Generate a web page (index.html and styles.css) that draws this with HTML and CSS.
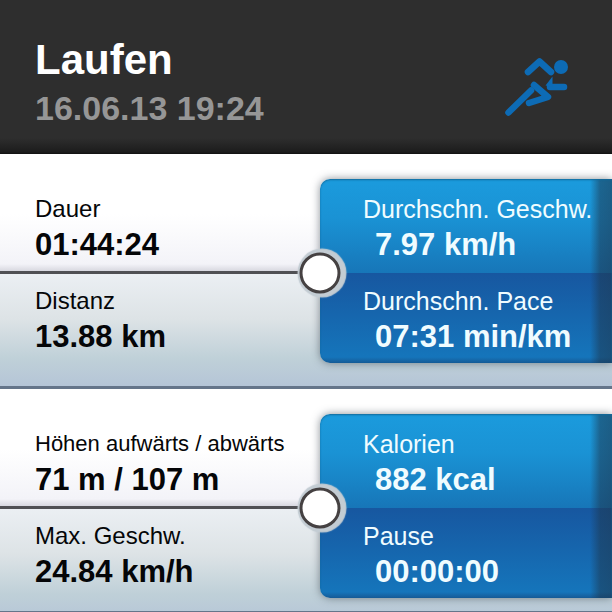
FILE: index.html
```html
<!DOCTYPE html>
<html lang="de">
<head>
<meta charset="utf-8">
<meta name="viewport" content="width=device-width, initial-scale=1">
<title>Laufen</title>
<link rel="stylesheet" href="styles.css">
</head>
<body>
<header class="header">
  <div>
    <h1 class="title">Laufen</h1>
    <time class="date" datetime="2013-06-16T19:24">16.06.13 19:24</time>
  </div>
  <svg class="runner" viewBox="0 0 64 60" aria-hidden="true">
    <path d="M23 18 34.500 7.500 46 18"/>
    <path d="M29 31 43 43 24 49"/>
    <path d="M26 36.500 3.500 58.500"/>
    <path d="M45 33H59"/>
    <path class="solid" d="M40.500 31.500 47.500 22.500V33Z"/>
    <circle class="solid" cx="56" cy="13" r="7"/>
  </svg>
</header>
<main>
  <section class="panel">
    <dl class="stats">
      <div><dt>Dauer</dt><dd>01:44:24</dd></div>
      <div><dt>Distanz</dt><dd>13.88 km</dd></div>
    </dl>
    <dl class="stats card">
      <div><dt>Durchschn. Geschw.</dt><dd>7.97 km/h</dd></div>
      <div><dt>Durchschn. Pace</dt><dd>07:31 min/km</dd></div>
    </dl>
    <span class="knob"></span>
  </section>
  <section class="panel panel-last">
    <dl class="stats">
      <div><dt class="long">Höhen aufwärts / abwärts</dt><dd>71 m / 107 m</dd></div>
      <div><dt>Max. Geschw.</dt><dd>24.84 km/h</dd></div>
    </dl>
    <dl class="stats card">
      <div><dt>Kalorien</dt><dd>882 kcal</dd></div>
      <div><dt>Pause</dt><dd>00:00:00</dd></div>
    </dl>
    <span class="knob"></span>
  </section>
</main>
</body>
</html>
```
FILE: styles.css
```css
* {
  box-sizing: border-box;
}

body {
  margin: 0;
  background: #fff;
  color: #050608;
  font-family: "Liberation Sans", Arial, sans-serif;
}

.header {
  display: flex;
  justify-content: space-between;
  align-items: flex-start;
  padding: 35px 43px 23px 35px;
  background: linear-gradient(#2e2e2e calc(100% - 16px), #1c1c1c calc(100% - 2px), #101010);
  color: #fff;
}

.title {
  margin: 0;
  font-size: 42px;
  line-height: 50px;
}

.date {
  display: block;
  color: #969696;
  font-size: 34px;
  font-weight: bold;
  line-height: 46px;
}

.runner {
  width: 64px;
  height: 60px;
  margin-top: 19px;
  overflow: visible;
  fill: none;
  stroke: #0d6bb5;
  stroke-width: 6.5;
  stroke-linecap: round;
  stroke-linejoin: round;
}

.runner .solid {
  fill: #0d6bb5;
  stroke: none;
}

.panel {
  --split: 320px;
  --line: 119px;
  position: relative;
  display: grid;
  grid-template-columns: var(--split) 1fr;
  padding: 25px 0 23px;
  overflow: hidden;
  border-bottom: 3px solid #65758a;
  background: linear-gradient(
    #fff 0,
    #fff 60px,
    #f3f3f8 110px,
    #d8d8e0 117px,
    #505054 117px,
    #505054 120px,
    #ebeff3 120px,
    #dde3e6 165px,
    #bfd0d8 205px,
    #b5c5d7 232px
  );
}

.panel-last {
  padding-bottom: 13px;
}

.stats {
  display: grid;
  gap: 22px;
  margin: 0;
  padding: 14px 0 8px 35px;
  white-space: nowrap;
}

dt {
  font-size: 24px;
  line-height: 32px;
}

dt.long {
  font-size: 22px;
}

dd {
  margin: 0;
  font-size: 31px;
  font-weight: bold;
  line-height: 39px;
}

.stats > div {
  height: 70px;
}

.card {
  padding-left: 43px;
  border-radius: 10px 0 0 10px;
  background:
    linear-gradient(to left, #1d364d99 0, #1d364d88 12px, transparent 22px),
    linear-gradient(#1b9bdd 0, #1a92d4 40px, #1776b8 94px, #1757a0 94px, #1575bb 178px, #165a96 100%);
  box-shadow: 0 0 9px #3c465099, inset 0 1px 2px #12699a;
  color: #f0fcff;
}

.card dt {
  font-size: 25px;
}

.card dd {
  padding-left: 12px;
}

.knob {
  position: absolute;
  top: var(--line);
  left: var(--split);
  width: 41px;
  height: 41px;
  border: 3px solid #454142;
  border-radius: 50%;
  background: #fff;
  box-shadow: 2px 0 1px 4px #c3ccd3;
  transform: translate(-50%, -50%);
}
```
